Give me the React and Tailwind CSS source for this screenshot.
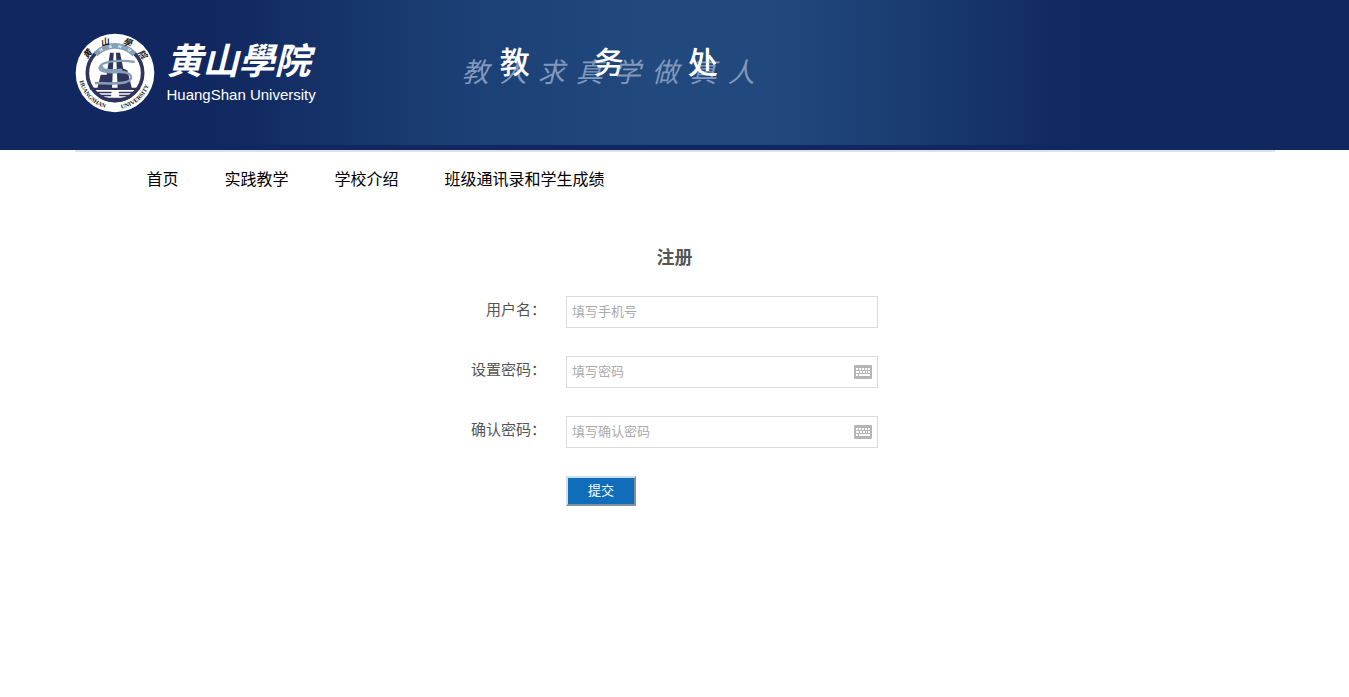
import React, { useState } from "react";

const menu = ["首页", "实践教学", "学校介绍", "班级通讯录和学生成绩"];

const campos = [
    { id: "username", label: "用户名：", placeholder: "填写手机号", type: "text" },
    { id: "password", label: "设置密码：", placeholder: "填写密码", type: "password", keyboard: true },
    { id: "confirm", label: "确认密码：", placeholder: "填写确认密码", type: "password", keyboard: true },
];

function Seal() {
    return (
        <svg viewBox="45 38 240 240" className="size-20 shrink-0" role="img" aria-label="黄山学院校徽">
            <circle cx="165" cy="158" r="118" fill="#fff" />
            <circle cx="165" cy="158" r="83" fill="none" stroke="#30345c" strokeWidth="11" />
            {/* light band on top with the initials */}
            <path d="M112 108A73 73 0 0 1 218 108L229 96A88 88 0 0 0 101 96Z" fill="#83a0b9" />
            <g fill="#fff" fontSize="13" fontWeight="bold" fontFamily="Liberation Sans, sans-serif" textAnchor="middle">
                <text transform="translate(125 93) rotate(-30)">H</text>
                <text transform="translate(151 83) rotate(-9)">S</text>
                <text transform="translate(179 83) rotate(9)">H</text>
                <text transform="translate(206 93) rotate(30)">U</text>
            </g>
            {/* road between the two towers */}
            <path d="M150 97H161L156 205H112L122 163H140Z" fill="#30345c" />
            <path d="M168 97H180L190 145L202 150L216 205H173Z" fill="#30345c" />
            <path d="M88 202H242L238 209H92Z" fill="#30345c" />
            <path d="M98 214H155L154 219H103ZM176 214H232L227 219H177Z" fill="#30345c" />
            <path d="M108 223H154L153 228H114ZM177 223H222L216 228H178Z" fill="#30345c" />
            <path d="M118 232H212A88 88 0 0 1 118 232Z" fill="#30345c" />
            <path
                d="M224 125C190 119 134 121 122 136C108 154 142 158 178 155C218 154 223 178 199 185C174 191 137 190 105 188"
                fill="none"
                stroke="#83a0b9"
                strokeWidth="7"
            />
            <path d="M126 136C121 154 158 150 187 149" fill="none" stroke="#83a0b9" strokeWidth="8" />
            <g
                fill="#151515"
                fontSize="26"
                fontWeight="bold"
                fontStyle="italic"
                fontFamily="Noto Sans CJK TC, sans-serif"
                textAnchor="middle"
            >
                <text transform="translate(89 107) rotate(-50)">黄</text>
                <text transform="translate(137 74) rotate(-17)">山</text>
                <text transform="translate(199 75) rotate(20)">學</text>
                <text transform="translate(240 108) rotate(50)">院</text>
            </g>
            <path id="seal-arc" d="M56 158A109 109 0 0 0 274 158" fill="none" />
            <g fill="#151515" fontSize="18" fontWeight="bold" fontFamily="Liberation Serif, serif">
                <text>
                    <textPath href="#seal-arc" startOffset="24">HUANGSHAN</textPath>
                </text>
                <text>
                    <textPath href="#seal-arc" startOffset="190">UNIVERSITY</textPath>
                </text>
            </g>
        </svg>
    );
}

function KeyboardIcon() {
    return (
        <svg viewBox="0 0 18 14" className="h-3.5 w-[18px]" aria-hidden="true">
            <rect width="18" height="14" rx="1" fill="#b5b5b5" />
            <path
                d="M2 3h2v2H2zM5 3h2v2H5zM8 3h2v2H8zM11 3h2v2h-2zM14 3h2v2h-2zM2 6h3v2H2zM6 6h2v2H6zM9 6h2v2H9zM12 6h1v2h-1zM14 6h2v2h-2zM2 9h2v2H2zM5 9h11v2H5z"
                fill="#fff"
            />
        </svg>
    );
}

function Header() {
    return (
        <header className="bg-[#10285f] pb-[5px]">
            <div className="bg-[linear-gradient(to_right,#10285f_16%,#1b3f74_34%,#21497e_48%,#21497e_57%,#1a3c71_67%,#10285f_80%)]">
                <div className="mx-auto flex h-[145px] max-w-[1200px] items-start pt-[33px]">
                    <a href="#" className="flex shrink-0 text-white">
                        <Seal />
                        <span className="ml-3 flex flex-col">
                            <span className="pt-2 text-[36px] leading-[42px] font-bold italic">黄山學院</span>
                            <span className="text-[15px] leading-6">HuangShan University</span>
                        </span>
                    </a>
                    <div className="relative ml-[146px] shrink-0">
                        <p className="flex gap-[11px] pt-5 text-[27px] leading-10 text-[#8198bb] italic">
                            {[..."教人求真学做真人"].map((c, i) => (
                                <span key={i}>{c}</span>
                            ))}
                        </p>
                        <h1 className="absolute top-2.5 left-[38px] flex gap-16 text-[30px] leading-10 font-medium text-white">
                            {[..."教务处"].map((c) => (
                                <span key={c}>{c}</span>
                            ))}
                        </h1>
                    </div>
                </div>
            </div>
        </header>
    );
}

export default function App() {
    const [datos, setDatos] = useState({ username: "", password: "", confirm: "" });

    const handleChange = (e) => {
        setDatos({ ...datos, [e.target.name]: e.target.value });
    };

    return (
        <div className="min-h-screen bg-white font-['Liberation_Sans','Noto_Sans_CJK_SC',sans-serif]">
            <Header />
            <div className="mx-auto max-w-[1200px] border-t-2 border-[#dce1ea]">
                <nav className="flex gap-[46px] pt-4 pl-[72px] text-base leading-6 text-black">
                    {menu.map((item) => (
                        <a key={item} href="#">
                            {item}
                        </a>
                    ))}
                </nav>
            </div>
            <main className="flex flex-col items-center pt-[54px]">
                <h2 className="text-[18px] leading-6 font-bold text-[#555]">注册</h2>
                <form className="flex flex-col gap-7 pt-[26px]" onSubmit={(e) => e.preventDefault()}>
                    {campos.map((campo) => (
                        <div key={campo.id} className="flex gap-5">
                            <label htmlFor={campo.id} className="w-[75px] text-right text-[15px] leading-7 whitespace-nowrap text-[#555]">
                                {campo.label}
                            </label>
                            <div className="flex h-8 w-[312px] items-center border border-[#dcdcdc] px-[5px]">
                                <input
                                    id={campo.id}
                                    name={campo.id}
                                    type={campo.type}
                                    value={datos[campo.id]}
                                    onChange={handleChange}
                                    placeholder={campo.placeholder}
                                    className="min-w-0 flex-1 text-[13px] leading-5 outline-none placeholder:text-[#aaa]"
                                />
                                {campo.keyboard && <KeyboardIcon />}
                            </div>
                        </div>
                    ))}
                    <button
                        type="submit"
                        className="ml-[95px] h-[30px] w-[70px] border-2 border-t-[#cde0f0] border-r-[#7f90a0] border-b-[#7f90a0] border-l-[#cde0f0] bg-[#0f6db9] text-[13px] leading-5 text-white"
                    >
                        提交
                    </button>
                </form>
            </main>
        </div>
    );
}
